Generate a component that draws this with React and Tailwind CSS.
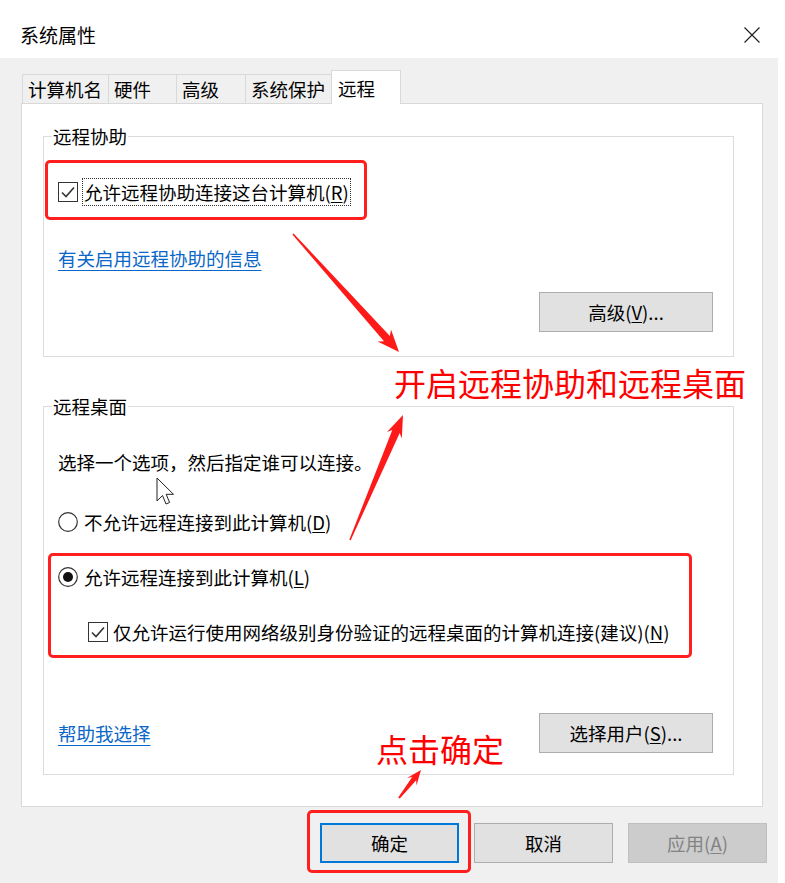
import React from "react";

function Check() {
  return (
    <svg width="20" height="20" viewBox="0 0 20 20" className="shrink-0">
      <rect x="0.5" y="0.5" width="19" height="19" fill="#fff" stroke="#333" />
      <path d="M4 10.5 L8 14.5 L16 5.5" fill="none" stroke="#333" strokeWidth="1.6" />
    </svg>
  );
}

function Radio({ on }) {
  return (
    <svg width="20" height="20" viewBox="0 0 20 20" className="shrink-0">
      <circle cx="10" cy="10" r="9.3" fill="#fff" stroke="#333" strokeWidth="1.2" />
      {on && <circle cx="10" cy="10" r="5" fill="#111" />}
    </svg>
  );
}

// tapered arrow used for the red annotations
function arrowPoints(tx, ty, px, py, head, hw, w0, w1) {
  const dx = px - tx;
  const dy = py - ty;
  const len = Math.hypot(dx, dy);
  const ux = dx / len;
  const uy = dy / len;
  const nx = -uy;
  const ny = ux;
  const bx = px - ux * head;
  const by = py - uy * head;
  const cx = px - ux * (head + 4);
  const cy = py - uy * (head + 4);
  const pts = [
    [tx + nx * w0, ty + ny * w0],
    [bx + nx * w1, by + ny * w1],
    [cx + nx * hw, cy + ny * hw],
    [px, py],
    [cx - nx * hw, cy - ny * hw],
    [bx - nx * w1, by - ny * w1],
    [tx - nx * w0, ty - ny * w0],
  ];
  return pts.map((p) => p[0].toFixed(1) + "," + p[1].toFixed(1)).join(" ");
}

function Btn({ children, className = "" }) {
  return (
    <div
      className={
        "w-[174px] h-[40px] flex items-center justify-center bg-[#e1e1e1] border border-[#adadad] text-[18.5px] text-black " +
        className
      }
    >
      {children}
    </div>
  );
}

export default function App() {
  const tabs = [
    { label: "计算机名", w: "w-[86px]" },
    { label: "硬件", w: "w-[68px]" },
    { label: "高级", w: "w-[69px]" },
    { label: "系统保护", w: "w-[86px]" },
  ];

  return (
    <div className="relative w-[785px] h-[883px] bg-white overflow-hidden font-['Noto_Sans_CJK_SC','Noto_Sans',sans-serif] text-black leading-[24px]">
      {/* title bar */}
      <div className="h-[58px] pt-[12px] flex items-center justify-between pl-[20px] pr-[25px]">
        <span className="text-[19px]">系统属性</span>
        <svg width="16" height="16" viewBox="0 0 16 16">
          <path d="M0.5 0.5 L15.5 15.5 M15.5 0.5 L0.5 15.5" stroke="#222" strokeWidth="1.2" />
        </svg>
      </div>

      {/* body */}
      <div className="w-[778px] h-[825px] bg-[#f0f0f0] pl-[21px] pt-[12px] flex flex-col">
        <div className="h-[33px] flex items-end ml-[1px]">
          {tabs.map((t) => (
            <div
              key={t.label}
              className={
                "h-[29px] border-t border-l border-[#d9d9d9] pl-[5px] flex items-center text-[18.5px] bg-[#f0f0f0] " + t.w
              }
            >
              {t.label}
            </div>
          ))}
          <div className="relative z-10 -mb-px w-[70px] h-[34px] bg-white border border-b-0 border-[#d9d9d9] pl-[6px] flex items-center text-[18.5px]">
            远程
          </div>
        </div>

        <div className="w-[742px] h-[704px] bg-white border border-[#d9d9d9] pl-[21px] pt-[32px] flex flex-col">
          {/* remote assistance */}
          <div className="relative w-[691px] h-[221px] border border-[#dcdcdc] pl-[14px] pt-[41px] flex flex-col">
            <span className="absolute -top-[13px] left-[8px] bg-white px-px text-[18.5px]">远程协助</span>
            <div className="h-[28px] flex items-center gap-[4px]">
              <Check />
              <span className="border border-dotted border-[#333] px-px h-[28px] flex items-center text-[18.5px]">
                允许远程协助连接这台计算机(<span className="underline underline-offset-2">R</span>)
              </span>
            </div>
            <div className="mt-[40px] text-[18.5px] text-[#0a66c8] underline underline-offset-4">
              有关启用远程协助的信息
            </div>
            <div className="mt-[22px] flex justify-end pr-[20px]">
              <Btn>
                高级(<span className="underline underline-offset-2">V</span>)...
              </Btn>
            </div>
          </div>

          {/* remote desktop */}
          <div className="relative mt-[49px] w-[691px] h-[369px] border border-[#dcdcdc] pl-[14px] pt-[43px] flex flex-col">
            <span className="absolute -top-[13px] left-[8px] bg-white px-px text-[18.5px]">远程桌面</span>
            <div className="text-[18.5px]">选择一个选项，然后指定谁可以连接。</div>
            <div className="mt-[36px] flex items-center gap-[6px] text-[18.5px]">
              <Radio />
              <span>
                不允许远程连接到此计算机(<span className="underline underline-offset-2">D</span>)
              </span>
            </div>
            <div className="mt-[31px] flex items-center gap-[6px] text-[18.5px]">
              <Radio on />
              <span>
                允许远程连接到此计算机(<span className="underline underline-offset-2">L</span>)
              </span>
            </div>
            <div className="mt-[31px] pl-[30px] flex items-center gap-[5px] text-[18.5px]">
              <Check />
              <span>
                仅允许运行使用网络级别身份验证的远程桌面的计算机连接(建议)(<span className="underline underline-offset-2">N</span>)
              </span>
            </div>
            <div className="mt-[69px] flex items-center justify-between pr-[20px]">
              <span className="text-[18.5px] text-[#0a66c8] underline underline-offset-4">帮助我选择</span>
              <Btn>
                选择用户(<span className="underline underline-offset-2">S</span>)...
              </Btn>
            </div>
          </div>
        </div>

        {/* dialog buttons */}
        <div className="mt-[16px] ml-[299px] flex gap-[15px] text-[18.5px]">
          <div className="w-[139px] h-[40px] flex items-center justify-center bg-[#e1e1e1] border-2 border-[#0078d7]">
            确定
          </div>
          <div className="w-[139px] h-[40px] flex items-center justify-center bg-[#e1e1e1] border border-[#adadad]">
            取消
          </div>
          <div className="w-[139px] h-[40px] flex items-center justify-center bg-[#cccccc] border border-[#bfbfbf] text-[#838383]">
            应用(<span className="underline underline-offset-2">A</span>)
          </div>
        </div>
      </div>

      {/* annotations */}
      <div className="absolute left-[45px] top-[160px] w-[322px] h-[60px] border-[3px] border-[#ff1f1f] rounded-[5px]" />
      <div className="absolute left-[48px] top-[553px] w-[644px] h-[105px] border-[3px] border-[#ff1f1f] rounded-[5px]" />
      <div className="absolute left-[307px] top-[810px] w-[164px] h-[63px] border-[3px] border-[#ff1f1f] rounded-[5px]" />
      <div className="absolute left-[394px] top-[362px] text-[32px] leading-[40px] text-[#ff0000]">开启远程协助和远程桌面</div>
      <div className="absolute left-[376px] top-[728px] text-[32px] leading-[40px] text-[#ff0000]">点击确定</div>
      <svg className="absolute inset-0 pointer-events-none" width="785" height="883">
        <polygon points={arrowPoints(293, 234, 399, 352, 18, 9, 0.8, 4)} fill="#ff1a1a" />
        <polygon points={arrowPoints(350, 540, 403, 415, 18, 8, 0.8, 4)} fill="#ff1a1a" />
        <polygon points={arrowPoints(399, 798, 421, 770, 11, 6, 1, 2.5)} fill="#ff1a1a" />
        <path
          d="M157 478 L157 501 L162.5 495.5 L166 504 L169.6 502.5 L166.2 494.3 L173.5 494.3 Z"
          fill="#fff"
          stroke="#222"
          strokeWidth="1"
          strokeLinejoin="round"
        />
      </svg>
    </div>
  );
}
